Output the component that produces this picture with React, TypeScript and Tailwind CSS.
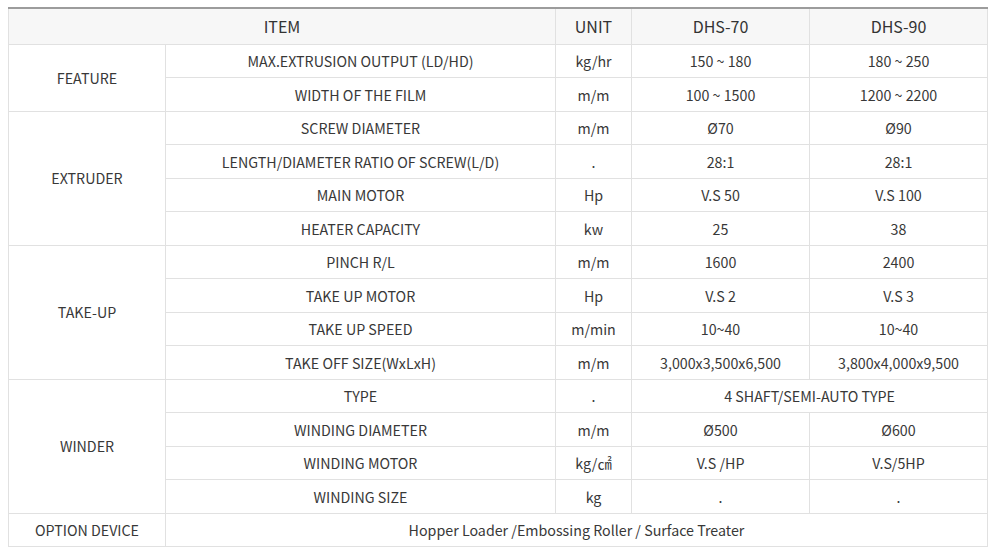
const rows: { group?: string; span?: number; item: string; unit: string; a: string; b?: string }[] = [
  { group: "FEATURE", span: 2, item: "MAX.EXTRUSION OUTPUT (LD/HD)", unit: "kg/hr", a: "150 ~ 180", b: "180 ~ 250" },
  { item: "WIDTH OF THE FILM", unit: "m/m", a: "100 ~ 1500", b: "1200 ~ 2200" },
  { group: "EXTRUDER", span: 4, item: "SCREW DIAMETER", unit: "m/m", a: "Ø70", b: "Ø90" },
  { item: "LENGTH/DIAMETER RATIO OF SCREW(L/D)", unit: ".", a: "28:1", b: "28:1" },
  { item: "MAIN MOTOR", unit: "Hp", a: "V.S 50", b: "V.S 100" },
  { item: "HEATER CAPACITY", unit: "kw", a: "25", b: "38" },
  { group: "TAKE-UP", span: 4, item: "PINCH R/L", unit: "m/m", a: "1600", b: "2400" },
  { item: "TAKE UP MOTOR", unit: "Hp", a: "V.S 2", b: "V.S 3" },
  { item: "TAKE UP SPEED", unit: "m/min", a: "10~40", b: "10~40" },
  { item: "TAKE OFF SIZE(WxLxH)", unit: "m/m", a: "3,000x3,500x6,500", b: "3,800x4,000x9,500" },
  { group: "WINDER", span: 4, item: "TYPE", unit: ".", a: "4 SHAFT/SEMI-AUTO TYPE" },
  { item: "WINDING DIAMETER", unit: "m/m", a: "Ø500", b: "Ø600" },
  { item: "WINDING MOTOR", unit: "kg/㎠", a: "V.S /HP", b: "V.S/5HP" },
  { item: "WINDING SIZE", unit: "kg", a: ".", b: "." },
];

const td = "border border-[#e1e1e1] text-center align-middle p-0";

export default function App() {
  return (
    <div className="w-[1000px] h-[556px] bg-white pt-[7px] pl-[8px]" style={{ fontFamily: '"Noto Sans CJK KR", "Noto Sans", sans-serif' }}>
      <table className="w-[979px] border-collapse table-fixed text-[14.25px] text-[#383838] border-t-2 border-t-[#9c9c9c]">
        <colgroup>
          <col className="w-[157px]" />
          <col className="w-[390px]" />
          <col className="w-[76px]" />
          <col className="w-[178px]" />
          <col className="w-[178px]" />
        </colgroup>
        <thead>
          <tr className="h-[36px] bg-[#f7f7f7] text-[16px] text-[#333]">
            <th colSpan={2} className={td + " font-normal"}>ITEM</th>
            <th className={td + " font-normal"}>UNIT</th>
            <th className={td + " font-normal"}>DHS-70</th>
            <th className={td + " font-normal"}>DHS-90</th>
          </tr>
        </thead>
        <tbody>
          {rows.map((r, i) => (
            <tr key={i} className="h-[33.5px]">
              {r.group && (
                <td rowSpan={r.span} className={td}>{r.group}</td>
              )}
              <td className={td}>{r.item}</td>
              <td className={td}>{r.unit}</td>
              {r.b === undefined ? (
                <td colSpan={2} className={td}>{r.a}</td>
              ) : (
                <>
                  <td className={td}>{r.a}</td>
                  <td className={td}>{r.b}</td>
                </>
              )}
            </tr>
          ))}
          <tr className="h-[33px]">
            <td className={td}>OPTION DEVICE</td>
            <td colSpan={4} className={td}>Hopper Loader /Embossing Roller / Surface Treater</td>
          </tr>
        </tbody>
      </table>
    </div>
  );
}
